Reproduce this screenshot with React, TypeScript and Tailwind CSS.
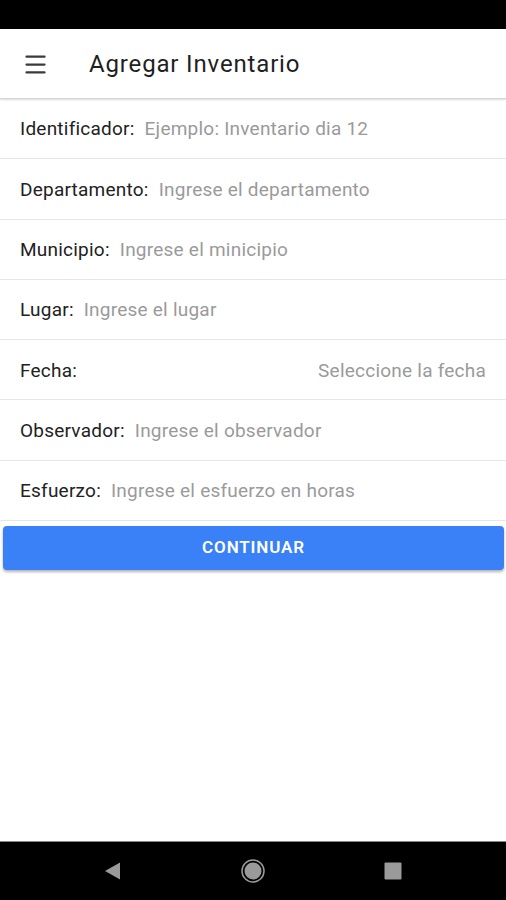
import { Menu } from 'lucide-react'

const fields = [
  { label: 'Identificador:', placeholder: 'Ejemplo: Inventario dia 12' },
  { label: 'Departamento:', placeholder: 'Ingrese el departamento' },
  { label: 'Municipio:', placeholder: 'Ingrese el minicipio' },
  { label: 'Lugar:', placeholder: 'Ingrese el lugar' },
  { label: 'Fecha:', placeholder: 'Seleccione la fecha', right: true },
  { label: 'Observador:', placeholder: 'Ingrese el observador' },
  { label: 'Esfuerzo:', placeholder: 'Ingrese el esfuerzo en horas' },
]

export default function App() {
  return (
    <div className="flex h-[900px] w-[506px] flex-col bg-white font-['Roboto',sans-serif]">
      {/* status bar */}
      <div className="h-[29px] bg-black" />

      {/* app bar */}
      <header className="relative z-10 flex h-[70px] items-center border-b border-[#d6d6d6] bg-white pt-[1px] shadow-[0_1px_2px_rgba(0,0,0,0.15)]">
        <div className="ml-[21px] flex w-[28px] justify-center text-[#3a3a3a]">
          <Menu size={27} strokeWidth={2} />
        </div>
        <h1 className="ml-[40px] text-[24px] tracking-[0.035em] text-[#1f1f1f]">Agregar Inventario</h1>
      </header>

      <div className="flex flex-col">
        {fields.map((f, i) => (
          <div
            key={i}
            className="flex h-[60.3px] items-center border-b border-[#e6e6e6] px-[20px] pt-[2px] text-[19px] tracking-[0.012em]"
          >
            <span className="text-[#222]">{f.label}</span>
            <span className={f.right ? 'ml-auto text-[#9a9a9a]' : 'ml-[10px] text-[#9a9a9a]'}>
              {f.placeholder}
            </span>
          </div>
        ))}
      </div>

      <div className="pl-[3px] pr-[2px] pt-[5px]">
        <button className="flex h-[44px] w-full items-center justify-center rounded-[4px] bg-[#3a80f6] text-[17px] font-semibold tracking-[0.05em] text-white shadow-[0_2px_3px_rgba(0,0,0,0.3)]">
          CONTINUAR
        </button>
      </div>

      <div className="flex-1" />

      {/* navigation bar */}
      <nav className="flex h-[59px] items-center justify-center gap-[116px] border-t border-[#888] bg-black">
        <svg width="24" height="24" viewBox="0 0 24 24">
          <path d="M19 3.5 L19 20.5 L4 12 Z" fill="#9a9a9a" />
        </svg>
        <svg width="24" height="24" viewBox="0 0 24 24">
          <circle cx="12" cy="12" r="11" fill="none" stroke="#9a9a9a" strokeWidth="1.5" />
          <circle cx="12" cy="12" r="8.5" fill="#9a9a9a" />
        </svg>
        <svg width="24" height="24" viewBox="0 0 24 24">
          <rect x="3.5" y="3.5" width="17" height="17" rx="1" fill="#9a9a9a" />
        </svg>
      </nav>
    </div>
  )
}
